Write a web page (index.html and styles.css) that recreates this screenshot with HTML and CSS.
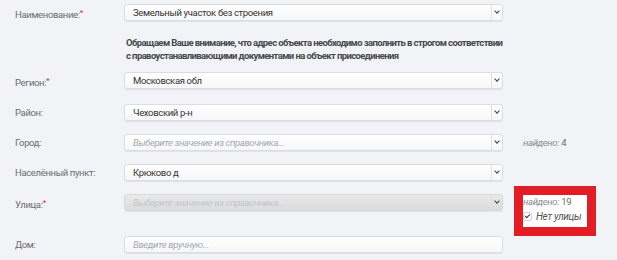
FILE: index.html
```html
<!DOCTYPE html>
<html lang="ru">
  <head>
    <meta charset="UTF-8" />
    <title>Адрес объекта</title>
    <link rel="stylesheet" href="styles.css">
  </head>
  <body>
    <form class="address-form">
      <div class="row">
        <div class="label">Наименование:<span class="req">*</span></div>
        <div class="field select">
          <span class="value">Земельный участок без строения</span>
          <span class="arrow"></span>
        </div>
      </div>

      <div class="note">
        Обращаем Ваше внимание, что адрес объекта необходимо заполнить в строгом соответствии<br>
        с правоустанавливающими документами на объект присоединения
      </div>

      <div class="row">
        <div class="label">Регион:<span class="req">*</span></div>
        <div class="field select">
          <span class="value">Московская обл</span>
          <span class="arrow"></span>
        </div>
      </div>

      <div class="row">
        <div class="label">Район:</div>
        <div class="field select">
          <span class="value">Чеховский р-н</span>
          <span class="arrow"></span>
        </div>
      </div>

      <div class="row">
        <div class="label">Город:</div>
        <div class="field select">
          <span class="value placeholder">Выберите значение из справочника...</span>
          <span class="arrow"></span>
        </div>
        <div class="info"><i>найдено:</i> 4</div>
      </div>

      <div class="row">
        <div class="label">Населённый пункт:</div>
        <div class="field select">
          <span class="value">Крюково д</span>
          <span class="arrow"></span>
        </div>
      </div>

      <div class="row row-street">
        <div class="label">Улица:<span class="req">*</span></div>
        <div class="field select disabled">
          <span class="value placeholder">Выберите значение из справочника...</span>
          <span class="arrow"></span>
        </div>
        <div class="info highlight">
          <div><i>найдено:</i> 19</div>
          <label class="check"><span class="box"></span><i>Нет улицы</i></label>
        </div>
      </div>

      <div class="row">
        <div class="label">Дом:</div>
        <div class="field">
          <span class="value placeholder">Введите вручную...</span>
        </div>
      </div>
    </form>
  </body>
</html>
```

FILE: styles.css
```css
* {
  box-sizing: border-box;
}

body {
  margin: 0;
  background: #f1f3f7;
  font-family: Roboto, "Liberation Sans", sans-serif;
  font-size: 9.5px;
  letter-spacing: -0.35px;
  color: #333;
}

.address-form {
  padding: 4px 0 0 15px;
}

.row {
  display: flex;
  align-items: flex-start;
  margin-bottom: 13px;
}

.row-street {
  margin-bottom: 9px;
}

.label {
  width: 109px;
  flex-shrink: 0;
  line-height: 17px;
  color: #6a6d72;
}

.req {
  color: #e3262b;
  font-size: 8px;
  vertical-align: 3px;
}

.field {
  position: relative;
  width: 379px;
  height: 17px;
  flex-shrink: 0;
  display: flex;
  align-items: center;
  border: 1px solid #dadde2;
  border-radius: 3px;
  background: linear-gradient(#ffffff, #f7f7f7);
  box-shadow: 0 1px 1px rgba(0, 0, 0, 0.07);
}

.field .value {
  flex: 1;
  padding-left: 8px;
  white-space: nowrap;
  overflow: hidden;
}

.placeholder {
  font-style: italic;
  color: #a4a8ae;
}

.arrow {
  width: 11px;
  height: 100%;
  border-left: 1px solid #dfe1e5;
  position: relative;
}

.arrow::after {
  content: "";
  position: absolute;
  left: 3px;
  top: 4px;
  width: 3px;
  height: 3px;
  border-right: 1.5px solid #3d4046;
  border-bottom: 1.5px solid #3d4046;
  transform: rotate(45deg);
}

.select.disabled {
  background: linear-gradient(#e9e9e9, #dcdcdc);
  border-color: #d6d8db;
}

.select.disabled .placeholder {
  color: #c3c5c8;
}

.note {
  margin: 0 0 10px 111px;
  white-space: nowrap;
  font-weight: bold;
  font-size: 9.5px;
  letter-spacing: -0.6px;
  line-height: 13px;
  color: #45484d;
}

.info {
  margin-left: 20px;
  line-height: 17px;
  color: #6a6d72;
}

.info i {
  color: #8a8d92;
}

.highlight {
  margin-top: 1px;
  width: 64px;
  height: 32px;
  background: #fff;
  outline: 9px solid #e31d25;
  line-height: 13px;
}

.check {
  display: flex;
  align-items: center;
  gap: 4px;
  margin-top: 2px;
}

.check i {
  color: #555;
  font-size: 10px;
  letter-spacing: -0.3px;
}

.box {
  position: relative;
  width: 9px;
  height: 9px;
  border: 1px solid #cfd2d6;
  border-radius: 2px;
  background: #fff;
}

.box::after {
  content: "";
  position: absolute;
  left: 2px;
  top: 0;
  width: 2px;
  height: 4px;
  border-right: 1.5px solid #1f3a68;
  border-bottom: 1.5px solid #1f3a68;
  transform: rotate(45deg);
}
```
